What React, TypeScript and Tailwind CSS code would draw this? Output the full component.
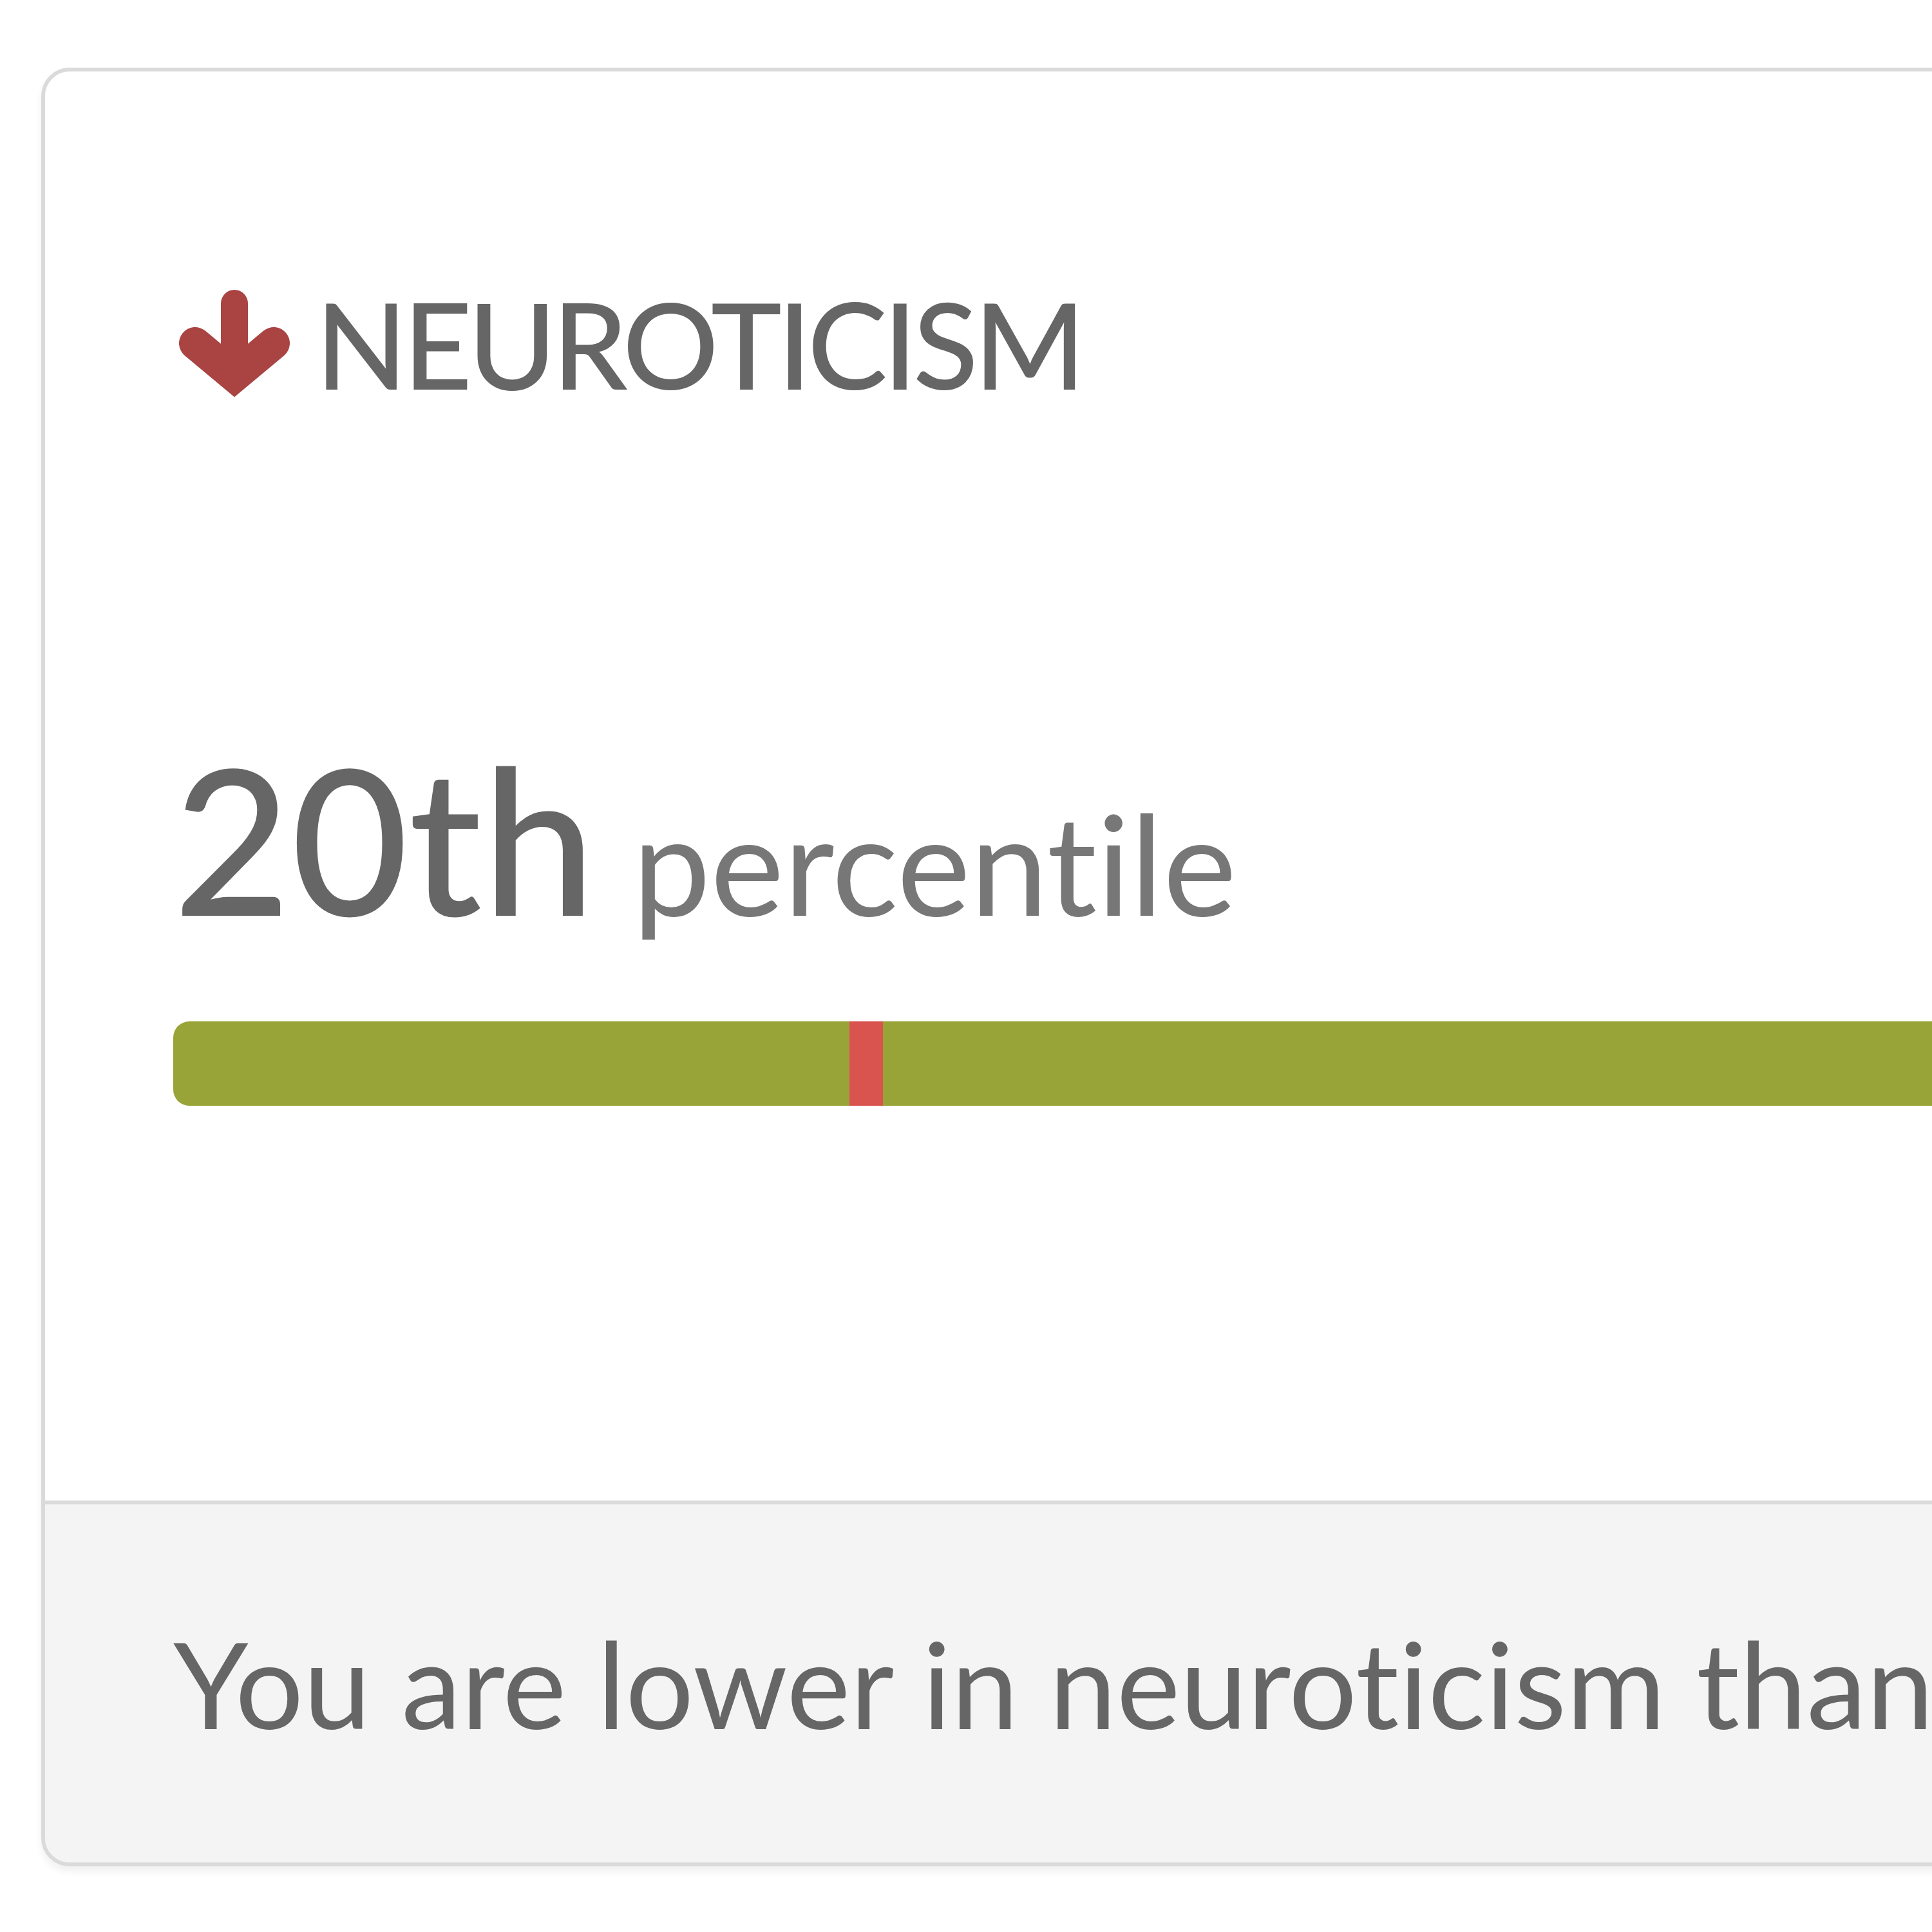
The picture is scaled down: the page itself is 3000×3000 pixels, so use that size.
import { useMemo } from "react";

type Trait = {
  name: string;
  percentile: number;
  direction: "up" | "down";
};

// thick down arrow, stem with round top and a mitred chevron head
const ArrowDown = () => (
  <svg
    width="172"
    height="167"
    viewBox="0 0 172 167"
    className="shrink-0 ml-[9px]"
    fill="none"
    stroke="#a94442"
  >
    <path d="M86 21 V128" strokeWidth="42" strokeLinecap="round" />
    <path
      d="M25 83 L86 134 L147 83"
      strokeWidth="50"
      strokeLinecap="round"
      strokeLinejoin="miter"
    />
  </svg>
);

const ordinal = (n: number) => {
  const s = ["th", "st", "nd", "rd"];
  const v = n % 100;
  return n + (s[(v - 20) % 10] || s[v] || s[0]);
};

const TraitCard = ({ trait }: { trait: Trait }) => {
  const summary = useMemo(() => {
    const word = trait.direction === "down" ? "lower" : "higher";
    const others = trait.direction === "down" ? 100 - trait.percentile : trait.percentile;
    return `You are ${word} in ${trait.name.toLowerCase()} than ${others}% of people.`;
  }, [trait]);

  return (
    <div className="w-[5660px] rounded-[44px] border-[6px] border-[#dadada] bg-white shadow-[0_8px_12px_rgba(0,0,0,0.06)] overflow-hidden text-[#666666]">
      <div className="px-[199px] pt-[329px] pb-[613px]">
        <h3 className="flex items-center gap-[40px] text-[186px] leading-none font-medium">
          <ArrowDown />
          <span className="tracking-[-6.5px]">{trait.name.toUpperCase()}</span>
        </h3>

        <div className="mt-[517px] text-[315px] leading-none font-medium">
          {ordinal(trait.percentile)}{" "}
          <span className="ml-[-22px] text-[216px] font-normal text-[#777777]">percentile</span>
        </div>

        <div className="relative mt-[128px] h-[131px] rounded-[25px] bg-[#98a437] overflow-hidden">
          <div
            className="absolute top-0 bottom-0 w-[52px] bg-[#d9534f]"
            style={{ left: `${trait.percentile}%` }}
          />
        </div>
      </div>

      <div className="border-t-[6px] border-[#dadada] bg-[#f4f4f4] px-[199px] pt-[183px] pb-[186px]">
        <p className="text-[187px] leading-none">{summary}</p>
      </div>
    </div>
  );
};

export default function App() {
  const trait: Trait = { name: "Neuroticism", percentile: 20, direction: "down" };

  return (
    <div className="w-[3000px] h-[3000px] overflow-hidden bg-white pl-[64px] pt-[105px] font-['Lato',sans-serif] [font-variant-ligatures:no-common-ligatures]">
      <TraitCard trait={trait} />
    </div>
  );
}
